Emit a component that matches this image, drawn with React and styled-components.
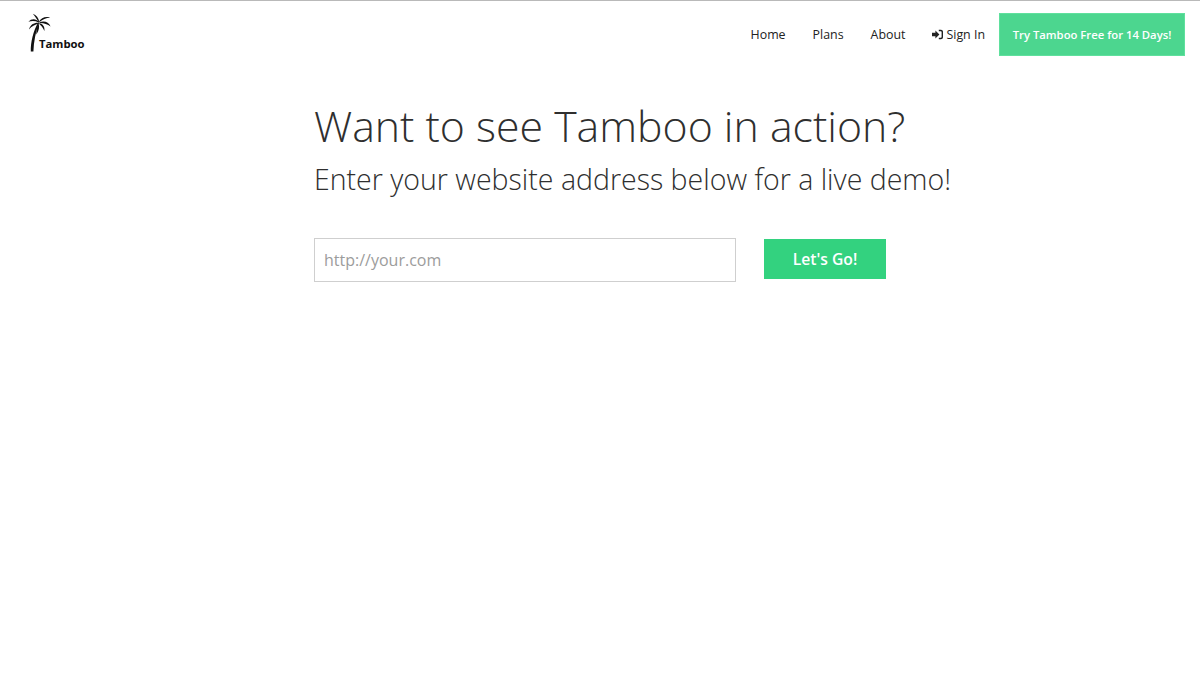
import React from "react";
import styled, { createGlobalStyle } from "styled-components";

const GlobalStyle = createGlobalStyle`
  html, body {
    margin: 0;
    padding: 0;
    background: #fff;
    font-family: "Open Sans", "Liberation Sans", sans-serif;
  }
  * {
    box-sizing: border-box;
  }
`;

const Page = styled.div`
  min-height: 685px;
  border-top: 1px solid #b9b9b9;
`;

const Header = styled.header`
  height: 68px;
  padding: 12px 15px 0 28px;
  display: flex;
  justify-content: space-between;
  align-items: flex-start;
`;

const Logo = styled.a`
  display: flex;
  align-items: flex-end;
  height: 40px;
  color: #111;
  text-decoration: none;
`;

const LogoText = styled.span`
  font-size: 11.3px;
  font-weight: 700;
  line-height: 14px;
  margin-left: -13px;
  margin-bottom: 2px;
`;

const Nav = styled.nav`
  display: flex;
  align-items: center;
  gap: 14px;
  height: 43px;
`;

const NavLinks = styled.div`
  display: flex;
  align-items: center;
  gap: 27px;
`;

const NavLink = styled.a`
  display: flex;
  align-items: center;
  gap: 3px;
  color: #222;
  font-size: 12.4px;
  text-decoration: none;
  white-space: nowrap;
`;

const TrialButton = styled.a`
  display: flex;
  align-items: center;
  justify-content: center;
  width: 186px;
  height: 43px;
  color: #fff;
  font-size: 11.3px;
  font-weight: 600;
  text-decoration: none;
  white-space: nowrap;
  background: #4cd68f;
  border: 1px solid #5fe09d;
`;

const Main = styled.main`
  padding: 26px 0 0 314px;
`;

const Title = styled.h1`
  margin: 0;
  color: #2f2f2f;
  font-size: 42.8px;
  font-weight: 300;
  line-height: 62px;
  white-space: nowrap;
`;

const Subtitle = styled.h2`
  margin: 0;
  color: #2f2f2f;
  font-size: 28.5px;
  font-weight: 300;
  line-height: 44px;
  white-space: nowrap;
`;

const DemoForm = styled.form`
  display: flex;
  align-items: flex-start;
  gap: 28px;
  margin-top: 37px;
`;

const UrlInput = styled.input`
  width: 422px;
  height: 44px;
  padding: 0 9px;
  color: #333;
  font-family: inherit;
  font-size: 16px;
  background: #fff;
  border: 1px solid #cfcfcf;
  border-radius: 0;
  outline: none;

  &::placeholder {
    color: #9c9c9c;
    opacity: 1;
  }
`;

const GoButton = styled.button`
  width: 122px;
  height: 40px;
  margin-top: 1px;
  color: #fff;
  font-family: inherit;
  font-size: 15.7px;
  font-weight: 600;
  background: #33d27f;
  border: 0;
  cursor: pointer;
`;

const PalmIcon = () => (
  <svg width="24" height="40" viewBox="0 0 24 40" fill="#111">
    <path d="M2.8 38.6 C2.6 29 5.2 18 10.2 9.4 L11 9.8 C7.6 19 5.8 29 5.4 38.6 Z" />
    <path d="M10.8 8.8 C8 5.6 3.5 5.4 0.4 8.8 C3.5 7.8 7 7.8 10.8 9.4 Z" />
    <path d="M10.6 9.8 C6.5 9.4 2.4 11.4 1 16.4 C3.5 13.2 7 11.4 10.8 10.4 Z" />
    <path d="M11.2 8.8 C10.6 5 8.4 2.2 4.8 0.8 C6.8 3 8.6 5.6 10.4 9 Z" />
    <path d="M11 8.6 C13 4.6 17.6 3 22.2 4.4 C18 4.8 14.6 6.4 11.6 9 Z" />
    <path d="M11.2 9.4 C15.8 7.4 20.6 8.6 22.6 13.6 C19.5 11 15.5 9.8 11.4 10 Z" />
    <path d="M11.4 10.2 C14.8 10.6 17 13.8 16.4 18 C15 15 13.2 12.4 11 10.8 Z" />
    <path d="M10.4 10.6 C11.8 13.6 11 17.6 8.4 21.6 C8.2 17.6 8.8 13.8 10.4 10.6 Z" />
  </svg>
);

const SignInIcon = () => (
  <svg width="11" height="11" viewBox="0 0 11 11" fill="#222">
    <path d="M0 3.7 H3.4 V1.4 L7.4 5.5 L3.4 9.6 V7.3 H0 Z" />
    <path d="M6.8 0.8 H9 C10.1 0.8 11 1.7 11 2.8 V8.2 C11 9.3 10.1 10.2 9 10.2 H6.8 V8.8 H8.8 C9.3 8.8 9.6 8.5 9.6 8 V3 C9.6 2.5 9.3 2.2 8.8 2.2 H6.8 Z" />
  </svg>
);

const App = () => {
  return (
    <Page>
      <GlobalStyle />
      <Header>
        <Logo href="#">
          <PalmIcon />
          <LogoText>Tamboo</LogoText>
        </Logo>
        <Nav>
          <NavLinks>
            <NavLink href="#">Home</NavLink>
            <NavLink href="#">Plans</NavLink>
            <NavLink href="#">About</NavLink>
            <NavLink href="#">
              <SignInIcon />
              Sign In
            </NavLink>
          </NavLinks>
          <TrialButton href="#">Try Tamboo Free for 14 Days!</TrialButton>
        </Nav>
      </Header>
      <Main>
        <Title>Want to see Tamboo in action?</Title>
        <Subtitle>Enter your website address below for a live demo!</Subtitle>
        <DemoForm onSubmit={(e) => e.preventDefault()}>
          <UrlInput type="text" placeholder="http://your.com" />
          <GoButton type="submit">Let's Go!</GoButton>
        </DemoForm>
      </Main>
    </Page>
  );
};

export default App;
